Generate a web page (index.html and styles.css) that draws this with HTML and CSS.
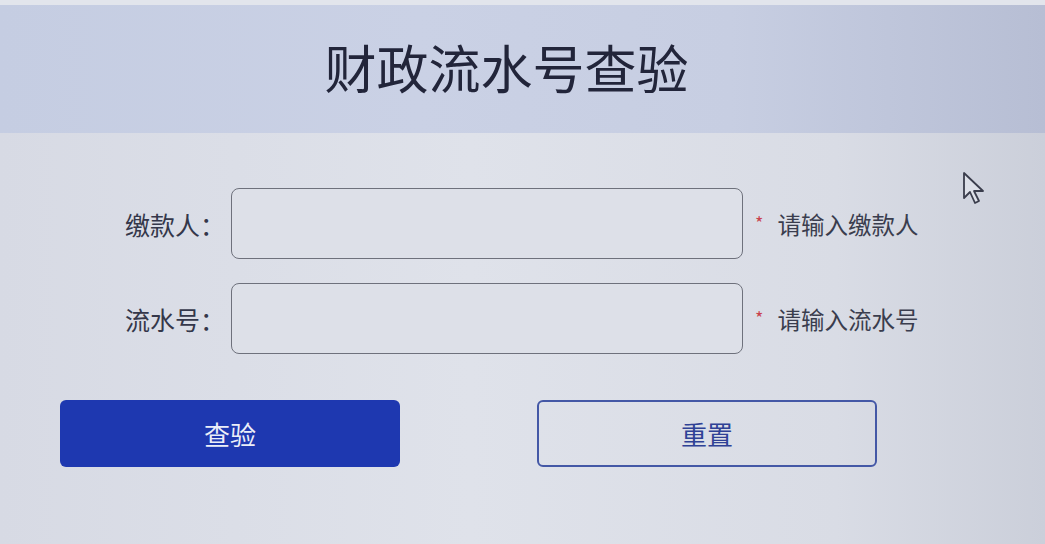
FILE: index.html
```html
<!DOCTYPE html>
<html lang="zh-CN">
<head>
<meta charset="utf-8">
<title>财政流水号查验</title>
<link rel="stylesheet" href="styles.css">
</head>
<body>
<div class="page">
  <header class="header">
    <h1 class="title">财政流水号查验</h1>
  </header>
  <main class="form">
    <div class="row">
      <label class="label">缴款人：</label>
      <div class="input"></div>
      <span class="hint"><span class="star">*</span>请输入缴款人</span>
    </div>
    <div class="row">
      <label class="label">流水号：</label>
      <div class="input"></div>
      <span class="hint"><span class="star">*</span>请输入流水号</span>
    </div>
    <div class="actions">
      <button class="btn btn-primary">查验</button>
      <button class="btn btn-outline">重置</button>
    </div>
  </main>
  <svg class="cursor" width="26" height="36" viewBox="0 0 26 36">
    <path d="M2 2 L2 27 L8 21 L13 32 L17 30 L12 20 L21 20 Z" fill="#dde0e8" stroke="#3a3d4c" stroke-width="1.8" stroke-linejoin="round"/>
  </svg>
</div>
</body>
</html>
```
FILE: styles.css
```css
html, body {
  margin: 0;
  padding: 0;
}
body {
  width: 1045px;
  height: 544px;
  overflow: hidden;
  font-family: "Noto Sans CJK SC", "Noto Sans", sans-serif;
  color: #2b2e3d;
  background: linear-gradient(90deg, #d7dae4 0%, #dfe2ea 45%, #d9dce5 80%, #cbcfda 100%);
}
.page {
  position: relative;
  height: 544px;
}
.header {
  height: 133px;
  box-sizing: border-box;
  border-top: 5px solid #e2e5ec;
  background: linear-gradient(90deg, #c5cde2 0%, #cad1e5 40%, #c7cee2 70%, #b7bed4 100%);
  display: flex;
  align-items: center;
  justify-content: center;
}
.title {
  margin: 0 0 6px 0;
  font-size: 52px;
  font-weight: 400;
  color: #22253a;
  transform: translateX(-16px);
}
.form {
  padding-top: 55px;
}
.row {
  display: flex;
  align-items: center;
  height: 71px;
  margin-bottom: 24px;
}
.label {
  width: 231px;
  text-align: right;
  font-size: 25px;
  color: #34374a;
  padding-right: 6px;
  box-sizing: border-box;
}
.input {
  width: 512px;
  height: 71px;
  box-sizing: border-box;
  border: 1.5px solid #6e717c;
  border-radius: 8px;
  background: #dde0e8;
}
.hint {
  margin-left: 12px;
  font-size: 23.5px;
  color: #3a3d4e;
  display: flex;
  align-items: center;
}
.star {
  color: #c9434e;
  font-size: 18px;
  margin-right: 14px;
  margin-top: -4px;
}
.actions {
  display: flex;
  gap: 137px;
  padding-left: 60px;
  margin-top: 46px;
}
.btn {
  width: 340px;
  height: 67px;
  border-radius: 6px;
  font-family: "Noto Sans CJK SC", "Noto Sans", sans-serif;
  font-size: 26px;
  cursor: pointer;
}
.btn-primary {
  background: #1e38b0;
  border: none;
  color: #ebeef8;
}
.btn-outline {
  background: transparent;
  border: 2px solid #4458a6;
  color: #2f4296;
}
.cursor {
  position: absolute;
  left: 962px;
  top: 171px;
}
```
